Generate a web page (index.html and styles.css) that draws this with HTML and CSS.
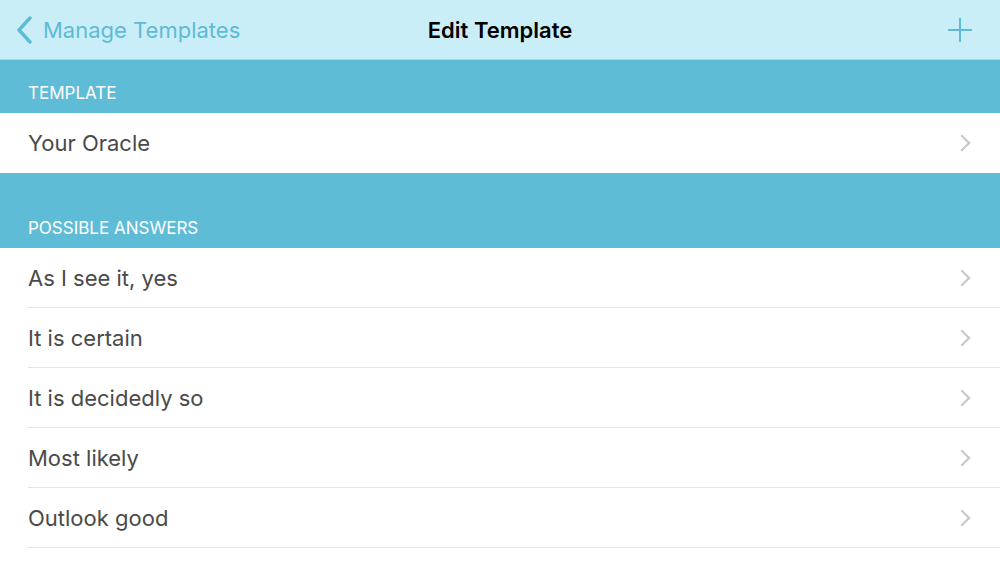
FILE: index.html
```html
<!DOCTYPE html>
<html lang="en">
<head>
    <meta charset="UTF-8">
    <meta name="viewport" content="width=device-width, initial-scale=1.0">
    <title>Edit Template</title>
    <link rel="stylesheet" href="styles.css">
</head>
<body>
    <div class="navbar">
        <a class="back" href="#">
            <svg class="back-icon" width="18" height="28" viewBox="0 0 18 28">
                <path d="M14 2 L3 14 L14 26" fill="none" stroke="#5dbbd6" stroke-width="3.4" stroke-linecap="round" stroke-linejoin="round"/>
            </svg>
            <span>Manage Templates</span>
        </a>
        <h1>Edit Template</h1>
        <a class="add" href="#">
            <svg width="26" height="26" viewBox="0 0 26 26">
                <path d="M13 1 V25 M1 13 H25" stroke="#5dbbd6" stroke-width="2"/>
            </svg>
        </a>
    </div>

    <div class="section-header">Template</div>
    <ul class="list">
        <li class="row last">Your Oracle</li>
    </ul>

    <div class="section-header tall">Possible Answers</div>
    <ul class="list">
        <li class="row">As I see it, yes</li>
        <li class="row">It is certain</li>
        <li class="row">It is decidedly so</li>
        <li class="row">Most likely</li>
        <li class="row">Outlook good</li>
    </ul>
</body>
</html>
```

FILE: styles.css
```css
body {
    font-family: Inter, "Open Sans", sans-serif;
    margin: 0;
    padding: 0;
    background: #fff;
    overflow: hidden;
}
.navbar {
    height: 60px;
    background: #caeef7;
    border-bottom: 1px solid #a9d5e1;
    box-sizing: border-box;
    display: flex;
    align-items: center;
    position: relative;
}
.back {
    display: flex;
    align-items: center;
    text-decoration: none;
    color: #5dbbd6;
    font-size: 22px;
    padding-left: 16px;
}
.back-icon {
    margin-right: 9px;
}
.navbar h1 {
    position: absolute;
    left: 0;
    right: 0;
    margin: 0;
    text-align: center;
    font-size: 22px;
    font-weight: 600;
    color: #000;
    pointer-events: none;
}
.add {
    margin-left: auto;
    margin-right: 27px;
    display: flex;
}
.section-header {
    background: #5fbcd7;
    color: #fff;
    font-size: 17px;
    text-transform: uppercase;
    height: 53px;
    box-sizing: border-box;
    padding: 0 28px 10px;
    display: flex;
    align-items: flex-end;
}
.section-header.tall {
    height: 75px;
}
.list {
    list-style: none;
    margin: 0;
    padding: 0 0 0 28px;
}
.row {
    height: 60px;
    display: flex;
    align-items: center;
    font-size: 22px;
    color: #4a4a4a;
    border-bottom: 1px solid #e3e3e3;
    box-sizing: border-box;
    padding-right: 28px;
    position: relative;
}
.row.last {
    border-bottom: none;
}
.row::after {
    content: "";
    position: absolute;
    right: 32px;
    top: 24px;
    width: 12px;
    height: 12px;
    box-sizing: border-box;
    border-top: 2.5px solid #c7c7cc;
    border-right: 2.5px solid #c7c7cc;
    transform: rotate(45deg);
}
```
